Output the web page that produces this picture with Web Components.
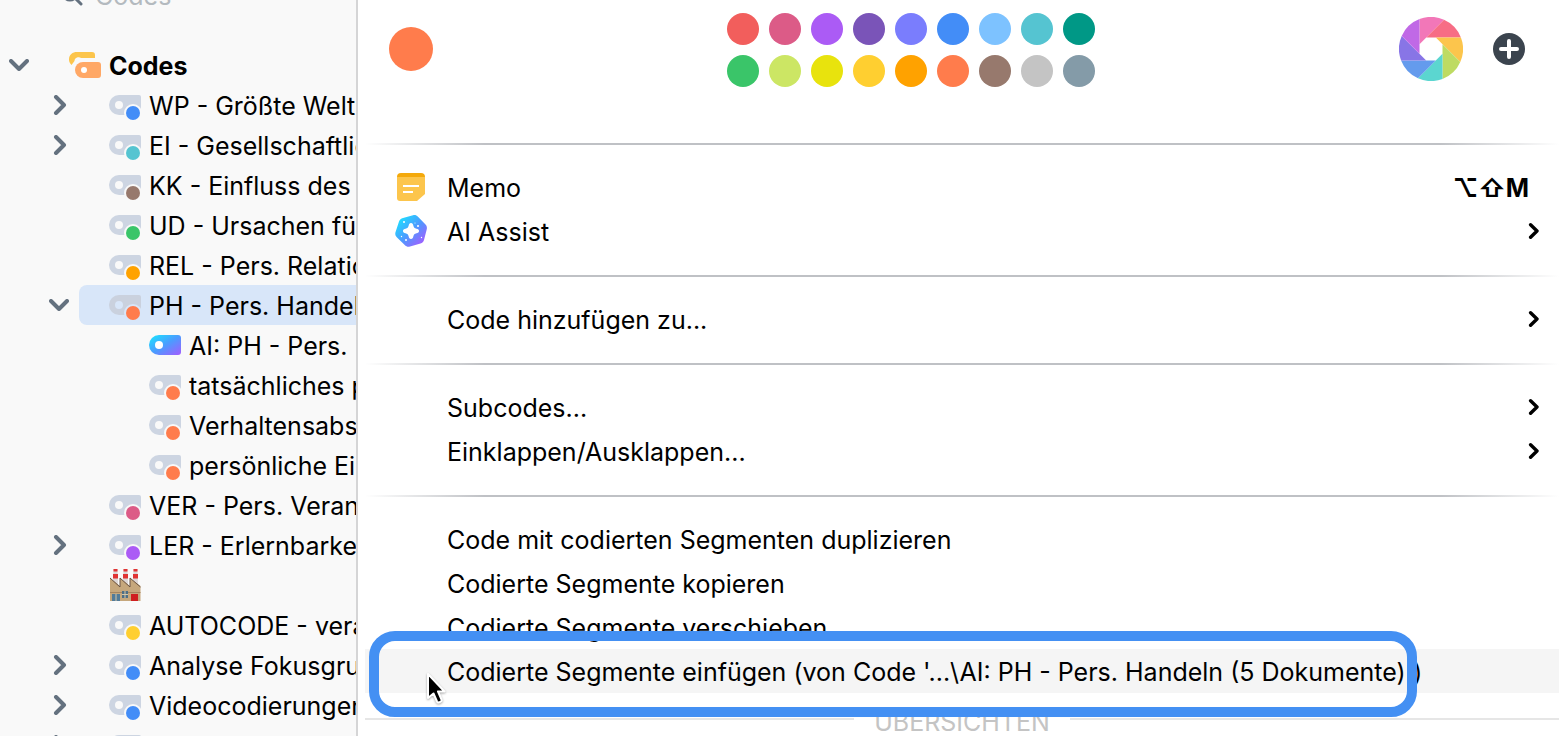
<!DOCTYPE html>
<html lang="de">
<head>
<meta charset="utf-8">
<meta name="viewport" content="width=device-width, initial-scale=1.0">
<title>Codes</title>
<style>
html, body {
  margin: 0;
  height: 100%;
  overflow: hidden;
}
body {
  font-family: Inter, "Liberation Sans", sans-serif;
  font-size: 25px;
  line-height: 42px;
  color: #000;
  background: #fff;
}
</style>
</head>
<body>

<code-app>
  <code-tree slot="sidebar">
    <tree-row level="0" icon="folder" toggle="open">Codes</tree-row>
    <tree-row level="1" color="#438df7" toggle="closed">WP - Größte Welt</tree-row>
    <tree-row level="1" color="#55c4d1" toggle="closed">EI - Gesellschaftlic</tree-row>
    <tree-row level="1" color="#97796d">KK - Einfluss des</tree-row>
    <tree-row level="1" color="#3ac569">UD - Ursachen für</tree-row>
    <tree-row level="1" color="#ffa200">REL - Pers. Relatio</tree-row>
    <tree-row level="1" color="#ff7c4c" toggle="open" selected>PH - Pers. Handeln</tree-row>
    <tree-row level="2" icon="ai">AI: PH - Pers. H</tree-row>
    <tree-row level="2" color="#ff7c4c">tatsächliches p</tree-row>
    <tree-row level="2" color="#ff7c4c">Verhaltensabs</tree-row>
    <tree-row level="2" color="#ff7c4c">persönliche Ei</tree-row>
    <tree-row level="1" color="#dc5b87">VER - Pers. Veran</tree-row>
    <tree-row level="1" color="#ab5bf5" toggle="closed">LER - Erlernbarke</tree-row>
    <tree-row level="1" icon="factory"></tree-row>
    <tree-row level="1" color="#ffcf30">AUTOCODE - vera</tree-row>
    <tree-row level="1" color="#438df7" toggle="closed">Analyse Fokusgru</tree-row>
    <tree-row level="1" color="#438df7" toggle="closed">Videocodierungen</tree-row>
    <tree-row level="1" color="#438df7" toggle="closed"></tree-row>
  </code-tree>

  <context-menu>
    <color-bar></color-bar>
    <menu-line></menu-line>
    <menu-item icon="memo" shortcut="⌥⇧M">Memo</menu-item>
    <menu-item icon="assist" submenu>AI Assist</menu-item>
    <menu-line></menu-line>
    <menu-item submenu>Code hinzufügen zu...</menu-item>
    <menu-line></menu-line>
    <menu-item submenu>Subcodes...</menu-item>
    <menu-item submenu>Einklappen/Ausklappen...</menu-item>
    <menu-line></menu-line>
    <menu-item>Code mit codierten Segmenten duplizieren</menu-item>
    <menu-item>Codierte Segmente kopieren</menu-item>
    <menu-item>Codierte Segmente verschieben</menu-item>
    <menu-item active>Codierte Segmente einfügen (von Code '...\AI: PH - Pers. Handeln (5 Dokumente)')</menu-item>
    <menu-heading>ÜBERSICHTEN</menu-heading>
  </context-menu>
</code-app>

<script>
(() => {
const ICONS = {
  folder: `<svg width="32" height="40" viewBox="0 0 32 40">
    <path d="M2.500 20C.6 18 0 16.500 0 14.500 0 9.500 3.500 7 8 7h15a3 3 0 0 1 3 3v3H12c-1-1-2.500-1-4-.5-2 1-2.500 2-2.500 3.500z" fill="#fcc54c"/>
    <path d="M14 17h15a3 3 0 0 1 3 3v10a3 3 0 0 1-3 3H14a8 8 0 0 1 0-16z" fill="#ffa866"/>
    <circle cx="15" cy="25" r="3" fill="#fff"/></svg>`,
  code: `<svg width="32" height="40" viewBox="0 0 32 40">
    <path d="M10 10h20a2 2 0 0 1 2 2v18H10a10 10 0 0 1 0-20z" fill="var(--tag, #cdd5e2)"/>
    <circle cx="10" cy="20" r="4" fill="var(--row-bg, #f9f9f9)"/>
    <circle cx="24" cy="28" r="9" fill="var(--row-bg, #f9f9f9)"/>
    <circle cx="24" cy="28" r="7" fill="var(--dot)"/></svg>`,
  ai: `<svg width="32" height="40" viewBox="0 0 32 40">
    <defs><linearGradient id="g" x1="0" y1="0" x2="1" y2="1">
      <stop offset=".05" stop-color="#1ce1ff"/><stop offset=".5" stop-color="#4b9cff"/><stop offset="1" stop-color="#a35cff"/>
    </linearGradient></defs>
    <path d="M10 10h19a3 3 0 0 1 3 3v14a3 3 0 0 1-3 3H10a10 10 0 0 1 0-20z" fill="url(#g)"/>
    <circle cx="10" cy="20" r="4" fill="#fff"/></svg>`,
  factory: `<svg width="32" height="40" viewBox="0 0 32 40">
    <path d="M4 20l.5-16h4l.5 16zM14 20l.5-16h4l.5 16zM24 20l.5-16h4l.5 16z" fill="#dcd5d5"/>
    <path d="M4.500 4h4v2.500h-4zM4 9h5v4.500H4zM14.500 4h4v2.500h-4zM14 9h5v4.500h-5zM24.500 4h4v2.500h-4zM24 9h5v4.500h-5z" fill="#e03434"/>
    <path d="M1 13l10 8v-8l10 8v-8l10.500 8v15H1z" fill="#c6a77c"/>
    <path d="M1 13l10 9v-9l10 9v-9l10.500 9" fill="none" stroke="#6b5545" stroke-width="1"/>
    <path d="M1 27h30.500v1H1z" fill="#a58561"/>
    <path d="M3 29h8v7H3z" fill="#527b99"/>
    <path d="M13 26h6v7h-6z" fill="#4e6f86"/>
    <path d="M7 29v7M16 26v7M13 29.500h6" stroke="#d8c7a6" stroke-width="1"/>
    <path d="M22 29h7v7h-7z" fill="#cf1f20"/></svg>`,
  open: `<svg width="20" height="12" viewBox="0 0 20 12"><path d="M2 2l8 8 8-8" fill="none" stroke="#64717f" stroke-width="4" stroke-linecap="round" stroke-linejoin="round"/></svg>`,
  closed: `<svg width="16" height="20" viewBox="0 0 16 20"><path d="M5 2l8 8-8 8" fill="none" stroke="#64717f" stroke-width="4" stroke-linecap="round" stroke-linejoin="round"/></svg>`,
  memo: `<svg width="32" height="32" viewBox="0 0 32 32">
    <path d="M2 6h28v17l-8 7H5a3 3 0 0 1-3-3z" fill="#fcc54c"/>
    <path d="M2 6a4 4 0 0 1 4-4h20a4 4 0 0 1 4 4z" fill="#f4a90b"/>
    <path d="M8 15h16M8 21h10" stroke="#fff" stroke-width="2"/></svg>`,
  assist: `<svg width="32" height="32" viewBox="0 0 32 32">
    <defs><linearGradient id="g" x1="0" y1="0" x2="1" y2="1">
      <stop offset=".1" stop-color="#1ce1ff"/><stop offset=".5" stop-color="#4b9cff"/><stop offset=".9" stop-color="#a35cff"/>
    </linearGradient></defs>
    <path d="M8 3L18 .3c2-.6 3.500 0 5 1.500l7.500 7.800c1.300 1.400 1.700 3 1.200 5L29 25c-.5 2-1.700 3-3.500 3.500L15 31.500c-2 .6-3.500.2-5-1.200L2 22.500C.5 21 0 19.500.4 17.500L4 6.500C4.700 4.500 6 3.500 8 3z" fill="url(#g)"/>
    <path d="M16 8c1.500 0 2 1 2.300 2.500.5 2 1.200 2.700 3.200 3.200 1.500.3 2.500.8 2.500 2.300s-1 2-2.500 2.300c-2 .5-2.700 1.200-3.200 3.200C18 23 17.500 24 16 24s-2-1-2.300-2.500c-.5-2-1.200-2.700-3.200-3.200C9 18 8 17.500 8 16s1-2 2.500-2.300c2-.5 2.700-1.200 3.200-3.200C14 9 14.500 8 16 8z" fill="#fff"/>
    <g fill="#fff"><circle cx="9" cy="7" r="1"/><circle cx="23" cy="11" r="1"/><circle cx="6.500" cy="21.500" r=".7"/><circle cx="11" cy="25" r="1"/><circle cx="26.500" cy="22.500" r=".7"/><circle cx="20" cy="8" r=".5"/></g></svg>`,
  submenu: `<svg width="12" height="18" viewBox="0 0 12 18"><path d="M3.600 2.800l6.400 6.200-6.400 6.200" fill="none" stroke="#000" stroke-width="3.400" stroke-linecap="round" stroke-linejoin="round"/></svg>`,
  plus: `<svg width="32" height="32" viewBox="0 0 32 32"><circle cx="16" cy="16" r="16" fill="#3b444e"/><path d="M16 8v16M8 16h16" stroke="#fff" stroke-width="4" stroke-linecap="round"/></svg>`,
  cursor: `<svg width="20" height="34" viewBox="0 0 20 34"><path d="M2 2v24l5.500-4.500 3.500 8c.5 1 1.200 1.200 2.200.8l1.500-.7c1-.4 1.200-1.100.8-2.100L12 19.500h6.500z" fill="#000" stroke="#fff" stroke-width="2" stroke-linejoin="round"/></svg>`
};

const COLORS = [
  '#f25e5c', '#dc5b87', '#ab5bf5', '#7a54b8', '#7a7dfd', '#438df7', '#7dc2ff', '#55c4d1', '#009886',
  '#3ac569', '#cce664', '#e8e30d', '#ffcf30', '#ffa200', '#ff7c4c', '#97796d', '#c4c4c4', '#849ba8'
];

const WHEEL = ['#f277b8', '#f76d85', '#fcc54c', '#bedb62', '#5bd6d0', '#649bed', '#8875e6', '#c069e6'];

// Base class: fills an open shadow root with the element's own markup.
class BaseElement extends HTMLElement {
  constructor() {
    super();
    this.attachShadow({mode: 'open'});
  }

  connectedCallback() {
    this.shadowRoot.innerHTML = this.render();
  }
}

customElements.define('code-app', class extends BaseElement {
  render() {
    return `
      <style>
        :host { display: flex; height: 100vh; overflow: hidden; }
        aside { flex: none; width: 356px; background: #f9f9f9; border-right: 2px solid #d5d5d6; overflow: hidden; }
        main { flex: 1; min-width: 0; }
      </style>
      <aside><slot name="sidebar"></slot></aside>
      <main><slot></slot></main>`;
  }
});

customElements.define('code-tree', class extends BaseElement {
  render() {
    return `
      <style>
        :host { display: block; }
        /* the search field is scrolled almost out of view */
        label { display: flex; align-items: center; gap: 12px; height: 40px; margin: -24px 0 29px; padding-left: 61px; }
        input { flex: 1; min-width: 0; padding: 0; border: 0; outline: 0; background: none; font: inherit; color: inherit; }
        input::placeholder { color: #b4babf; opacity: 1; }
      </style>
      <label>
        <svg width="22" height="26" viewBox="0 0 22 26"><circle cx="9" cy="10" r="7" fill="none" stroke="#64717f" stroke-width="3"/><path d="M14 15l6 6" stroke="#64717f" stroke-width="3" stroke-linecap="round"/></svg>
        <input type="search" placeholder="Codes" aria-label="Codes">
      </label>
      <slot></slot>`;
  }
});

customElements.define('tree-row', class extends BaseElement {
  render() {
    const toggle = this.getAttribute('toggle');
    const icon = this.getAttribute('icon') || 'code';
    return `
      <style>
        :host { display: flex; height: 40px; padding-left: calc(var(--level) * 40px); --level: ${this.getAttribute('level')}; --dot: ${this.getAttribute('color')}; }
        :host([selected]) { --row-bg: #d8e6f9; --tag: #cad1de; }
        :host([level="0"]) .content { font-weight: 700; }
        button { display: flex; align-items: center; justify-content: center; width: 38px; margin: 0 1px 0 0; padding: 0; border: 0; background: none; }
        .content { flex: 1; min-width: 0; display: flex; gap: 8px; padding-left: 30px; background: var(--row-bg, none); border-radius: 8px 0 0 8px; white-space: nowrap; overflow: hidden; }
        .spacer { flex: none; width: 39px; }
        svg { display: block; flex: none; }
      </style>
      ${toggle ? `<button aria-label="Umschalten" aria-expanded="${toggle === 'open'}">${ICONS[toggle]}</button>` : '<span class="spacer"></span>'}
      <div class="content">${ICONS[icon]}<span><slot></slot></span></div>`;
  }
});

customElements.define('context-menu', class extends BaseElement {
  connectedCallback() {
    super.connectedCallback();
    this.setAttribute('role', 'menu');
  }

  render() {
    return `
      <style>
        :host { display: block; margin: 0 3px 0 7px; }
      </style>
      <slot></slot>`;
  }
});

customElements.define('color-bar', class extends BaseElement {
  render() {
    const swatches = COLORS.map(c => `<button class="swatch" aria-label="${c}" style="background: ${c}"></button>`).join('');
    const blades = WHEEL.map((c, i) =>
      `<path d="M-11.500 -4.800V-29.900A32 32 0 0 1 13 -29.300z" fill="${c}" transform="rotate(${i * 45})"/>`).join('');
    return `
      <style>
        :host { display: flex; align-items: center; justify-content: space-between; height: 98px; padding: 0 34px 23px 24px; }
        button { padding: 0; border: 0; border-radius: 50%; background: none; }
        .current { width: 44px; height: 44px; background: #ff7c4c; }
        .grid { display: grid; grid-template-columns: repeat(9, 32px); gap: 10px; padding-top: 2px; }
        .swatch { width: 32px; height: 32px; }
        .tools { display: flex; align-items: center; gap: 30px; padding-left: 10px; }
        svg { display: block; }
      </style>
      <button class="current" aria-label="Farbe"></button>
      <div class="grid">${swatches}</div>
      <div class="tools">
        <button aria-label="Farbkreis"><svg width="64" height="64" viewBox="-32 -32 64 64">${blades}</svg></button>
        <button aria-label="Neu">${ICONS.plus}</button>
      </div>`;
  }
});

customElements.define('menu-line', class extends BaseElement {
  render() {
    return `
      <style>
        :host { display: block; padding: 22px 0 20px; }
        hr { height: 2px; margin: 0; border: 0; background: linear-gradient(90deg, transparent, #bfc1c5 10%, #bfc1c5 90%, transparent); }
      </style>
      <hr>`;
  }
});

customElements.define('menu-item', class extends BaseElement {
  render() {
    const icon = this.getAttribute('icon');
    const shortcut = this.getAttribute('shortcut');
    return `
      <style>
        :host { display: block; position: relative; }
        :host([active]) { background: #f5f5f5; }
        button { display: flex; align-items: center; width: 100%; height: 44px; padding: 0 20px 0 30px; border: 0; background: none; font: inherit; color: inherit; text-align: left; white-space: nowrap; }
        .icon { flex: none; width: 52px; }
        .label { flex: 1; min-width: 0; padding-top: 2px; }
        .shortcut { font-weight: 700; padding-top: 2px; margin-right: 10px; }
        svg { display: block; }
        .ring { position: absolute; inset: -18px 142px -24px 4px; box-sizing: border-box; border: 10px solid #4490f3; border-radius: 26px; pointer-events: none; z-index: 1; }
        .cursor { position: absolute; left: 61px; top: 23px; z-index: 2; filter: drop-shadow(0 1px 1px rgba(0, 0, 0, .35)); }
      </style>
      <button role="menuitem">
        <span class="icon">${icon ? ICONS[icon] : ''}</span>
        <span class="label"><slot></slot></span>
        ${shortcut ? `<span class="shortcut">${shortcut}</span>` : ''}
        ${this.hasAttribute('submenu') ? ICONS.submenu : ''}
      </button>
      ${this.hasAttribute('active') ? `<div class="ring"></div><div class="cursor">${ICONS.cursor}</div>` : ''}`;
  }
});

customElements.define('menu-heading', class extends BaseElement {
  render() {
    return `
      <style>
        :host { display: flex; align-items: center; gap: 20px; height: 52px; color: #c4c4c4; }
        :host::before, :host::after { content: ""; flex: 1; height: 2px; background: #e6e6e6; }
        span { padding-top: 6px; }
      </style>
      <span><slot></slot></span>`;
  }
});
})();
</script>
</body>
</html>
